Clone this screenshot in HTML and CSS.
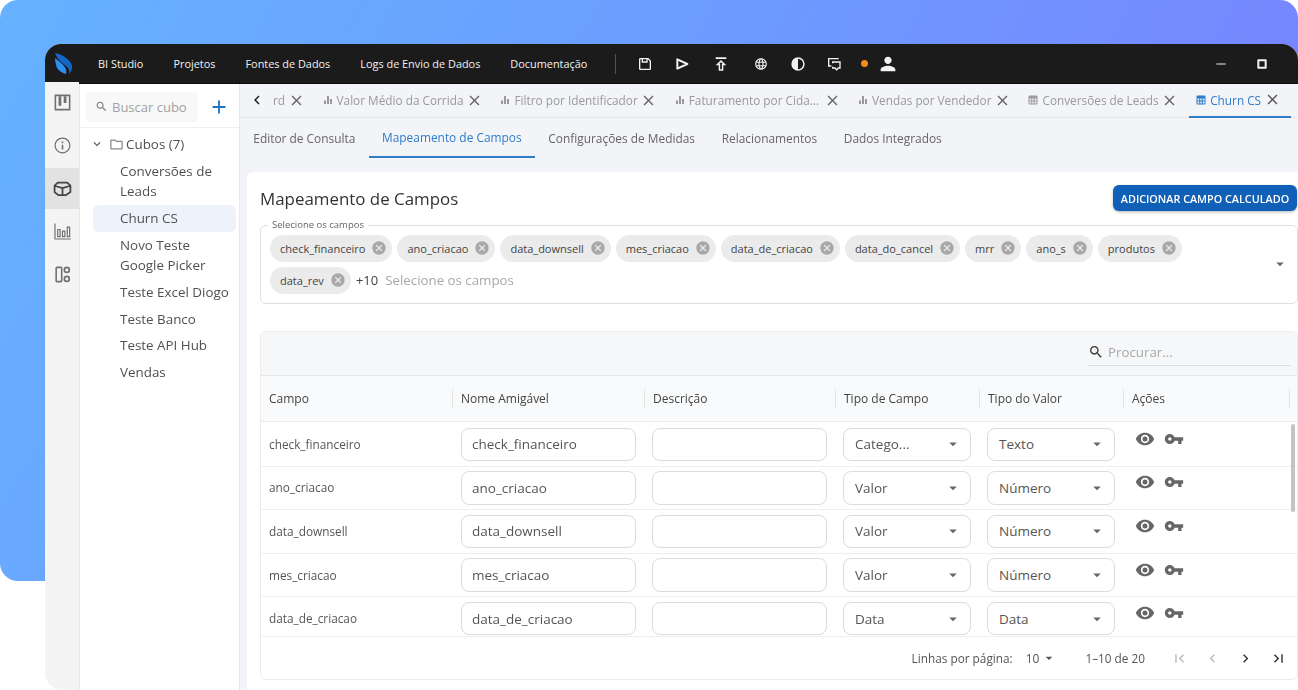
FILE: index.html
```html
<!DOCTYPE html>
<html lang="pt-BR">
<head>
<meta charset="utf-8">
<title>BI Studio</title>
<link rel="stylesheet" href="styles.css">
</head>
<body>
<svg class="defs" aria-hidden="true">
  <symbol id="i-save" viewBox="0 0 24 24"><path d="M17 3H5a2 2 0 0 0-2 2v14a2 2 0 0 0 2 2h14a2 2 0 0 0 2-2V7zm2 16H5V5h2v5h9V5h.17L19 7.83zM9 5h5v3H9z"/></symbol>
  <symbol id="i-run" viewBox="0 0 24 24"><path fill="none" stroke="currentColor" stroke-width="3" stroke-linejoin="round" d="M5 5 20 12 5 19z"/></symbol>
  <symbol id="i-pub" viewBox="0 0 24 24"><path d="M4 2h16v2.400H4zm8 4-8 8h4.500v8h7v-8H20zm1.300 6v7.800h-2.600V12H9.400L12 9.400l2.600 2.600z"/></symbol>
  <symbol id="i-globe" viewBox="0 0 24 24"><path d="M11.990 2C6.470 2 2 6.480 2 12s4.470 10 9.990 10C17.520 22 22 17.520 22 12S17.520 2 11.990 2zm6.930 6h-2.950c-.32-1.250-.78-2.450-1.380-3.560 1.840.63 3.370 1.910 4.330 3.560zM12 4.040c.83 1.200 1.480 2.530 1.910 3.960h-3.820c.43-1.430 1.080-2.760 1.910-3.960zM4.260 14C4.100 13.360 4 12.690 4 12s.1-1.360.26-2h3.380c-.08.66-.14 1.320-.14 2s.06 1.340.14 2H4.260zm.82 2h2.950c.32 1.250.78 2.450 1.380 3.560-1.840-.63-3.370-1.900-4.330-3.560zm2.950-8H5.080c.96-1.660 2.490-2.930 4.330-3.560C8.810 5.550 8.350 6.750 8.030 8zM12 19.960c-.83-1.200-1.480-2.530-1.910-3.960h3.820c-.43 1.430-1.080 2.760-1.910 3.960zM14.340 14H9.660c-.09-.66-.16-1.320-.16-2s.07-1.350.16-2h4.680c.09.650.16 1.320.16 2s-.07 1.340-.16 2zm.25 5.560c.6-1.110 1.060-2.310 1.380-3.560h2.950c-.96 1.650-2.490 2.930-4.330 3.560zM16.360 14c.08-.66.14-1.320.14-2s-.06-1.340-.14-2h3.380c.16.640.26 1.310.26 2s-.1 1.360-.26 2h-3.380z"/></symbol>
  <symbol id="i-contrast" viewBox="0 0 24 24"><path fill-rule="evenodd" d="M12 2a10 10 0 1 0 0 20 10 10 0 0 0 0-20zm0 2.200a7.800 7.800 0 0 1 0 15.600z"/></symbol>
  <symbol id="i-chat" viewBox="0 0 24 24"><path d="M3 3h16v2H5v9h3v2H3zM9 8h13v11h-3l-3 3-3-3H9v-3h2v1h3l2 2 2-2h2v-7h-9v1H9z"/></symbol>
  <symbol id="i-person" viewBox="0 0 24 24"><path d="M12 12c2.210 0 4-1.790 4-4s-1.790-4-4-4-4 1.790-4 4 1.790 4 4 4zm0 2c-2.670 0-8 1.340-8 4v2h16v-2c0-2.660-5.330-4-8-4z"/></symbol>
  <symbol id="i-search" viewBox="0 0 24 24"><path d="M15.500 14h-.79l-.28-.27C15.410 12.590 16 11.110 16 9.500 16 5.910 13.090 3 9.500 3S3 5.910 3 9.500 5.910 16 9.500 16c1.610 0 3.090-.59 4.230-1.570l.27.28v.79l5 4.990L20.490 19l-4.990-5zm-6 0C7.010 14 5 11.990 5 9.500S7.010 5 9.500 5 14 7.010 14 9.500 11.990 14 9.500 14z"/></symbol>
  <symbol id="i-close" viewBox="0 0 24 24"><path d="M19 6.410 17.590 5 12 10.590 6.410 5 5 6.410 10.590 12 5 17.590 6.410 19 12 13.410 17.590 19 19 17.590 13.410 12z"/></symbol>
  <symbol id="i-cancel" viewBox="0 0 24 24"><path d="M12 2C6.470 2 2 6.470 2 12s4.470 10 10 10 10-4.470 10-10S17.530 2 12 2zm5 13.590L15.590 17 12 13.410 8.410 17 7 15.590 10.590 12 7 8.410 8.410 7 12 10.590 15.590 7 17 8.410 13.410 12 17 15.590z"/></symbol>
  <symbol id="i-eye" viewBox="0 0 24 24"><path fill-rule="evenodd" d="M12 4.500C7 4.500 2.730 7.610 1 12c1.730 4.390 6 7.500 11 7.500s9.270-3.110 11-7.500c-1.730-4.390-6-7.500-11-7.500zM12 17c-2.760 0-5-2.240-5-5s2.240-5 5-5 5 2.240 5 5-2.240 5-5 5zm0-8a3 3 0 1 0 0 6 3 3 0 0 0 0-6z"/></symbol>
  <symbol id="i-key" viewBox="0 0 24 24"><path d="M12.650 10C11.830 7.670 9.610 6 7 6c-3.310 0-6 2.690-6 6s2.690 6 6 6c2.610 0 4.830-1.670 5.650-4H17v4h4v-4h2v-4H12.650zM7 14c-1.100 0-2-.9-2-2s.9-2 2-2 2 .9 2 2-.9 2-2 2z"/></symbol>
  <symbol id="i-bars" viewBox="0 0 24 24"><path d="M4 13h4v7H4zm6-9h4v16h-4zm6 6h4v10h-4z"/></symbol>
  <symbol id="i-table" viewBox="0 0 24 24"><path d="M5 3h14a2 2 0 0 1 2 2v14a2 2 0 0 1-2 2H5a2 2 0 0 1-2-2V5a2 2 0 0 1 2-2zm0 6v4h3.500V9zm5.500 0v4h3V9zm5 0v4H19V9zM5 15v4h3.500v-4zm5.500 0v4h3v-4zm5 0v4H19v-4z"/></symbol>
  <symbol id="i-first" viewBox="0 0 24 24"><path d="M18.410 16.590 13.820 12l4.590-4.590L17 6l-6 6 6 6zM6 6h2v12H6z"/></symbol>
  <symbol id="i-prev" viewBox="0 0 24 24"><path d="M15.410 7.410 14 6l-6 6 6 6 1.410-1.410L10.830 12z"/></symbol>
  <symbol id="i-next" viewBox="0 0 24 24"><path d="M10 6 8.590 7.410 13.170 12l-4.580 4.590L10 18l6-6z"/></symbol>
  <symbol id="i-last" viewBox="0 0 24 24"><path d="M5.590 7.410 10.180 12l-4.590 4.590L7 18l6-6-6-6zM16 6h2v12h-2z"/></symbol>
  <symbol id="i-down" viewBox="0 0 24 24"><path d="M7 10l5 5 5-5z"/></symbol>
  <symbol id="i-chev" viewBox="0 0 24 24"><path d="M16.590 8.590 12 13.170 7.410 8.590 6 10l6 6 6-6z"/></symbol>
  <symbol id="i-kanban" viewBox="0 0 24 24"><path fill-rule="evenodd" d="M2 2h20v20H2zm2 2v16h16V4z"/><path d="M7 4h3.500v12H7zm6.500 0H17v8.500h-3.500z"/></symbol>
  <symbol id="i-info" viewBox="0 0 24 24"><path d="M11 7h2v2h-2zm0 4h2v6h-2zm1-9C6.480 2 2 6.480 2 12s4.480 10 10 10 10-4.480 10-10S17.520 2 12 2zm0 18.500c-4.690 0-8.500-3.810-8.500-8.500S7.310 3.500 12 3.500s8.500 3.810 8.500 8.500-3.810 8.500-8.500 8.500z"/></symbol>
  <symbol id="i-cube" viewBox="0 0 24 24"><path fill="none" stroke="currentColor" stroke-width="2.200" stroke-linejoin="round" d="M6 4.500h12l4 4v8l-6 4H7l-5-4v-8zM2 8.500l10 3 10-3M12 11.500v9"/></symbol>
  <symbol id="i-chart" viewBox="0 0 24 24"><path fill="none" stroke="currentColor" stroke-width="1.500" stroke-linejoin="round" d="M2.500 2v19.500h20M6 18.500V9.500h3v9zM12 18.500v-7h3v7zM18 18.500V6.500h3v12z"/></symbol>
  <symbol id="i-widgets" viewBox="0 0 24 24"><path fill-rule="evenodd" d="M5 2h5a2 2 0 0 1 2 2v16a2 2 0 0 1-2 2H5a2 2 0 0 1-2-2V4a2 2 0 0 1 2-2zm0 2v16h5V4zm12.500-2a4.200 4.200 0 1 1 0 8.400 4.200 4.200 0 0 1 0-8.400zm0 2.200a2 2 0 1 0 0 4 2 2 0 0 0 0-4zm0 9.200a4.200 4.200 0 1 1 0 8.400 4.200 4.200 0 0 1 0-8.400zm0 2.200a2 2 0 1 0 0 4 2 2 0 0 0 0-4z"/></symbol>
  <symbol id="i-plus" viewBox="0 0 24 24"><path d="M19 13h-6v6h-2v-6H5v-2h6V5h2v6h6z"/></symbol>
  <symbol id="i-folder" viewBox="0 0 24 24"><path d="M9.170 6l2 2H20v10H4V6h5.170M10 4H4c-1.100 0-1.990.9-1.990 2L2 18c0 1.100.9 2 2 2h16c1.100 0 2-.9 2-2V8c0-1.100-.9-2-2-2h-8l-2-2z"/></symbol>
  <symbol id="i-min" viewBox="0 0 24 24"><path d="M5 11h14v2H5z"/></symbol>
  <symbol id="i-max" viewBox="0 0 24 24"><path fill-rule="evenodd" d="M6 5h12a1 1 0 0 1 1 1v12a1 1 0 0 1-1 1H6a1 1 0 0 1-1-1V6a1 1 0 0 1 1-1zm2 3v8h8V8z"/></symbol>
</svg>

<div class="hero"></div>

<div class="window">
  <header class="topbar">
    <svg class="logo" viewBox="0 0 18 21"><path class="logo-a" d="M0 0c6 1 13 5 16 10 2 4 1 8-2 11 1-3 0-6-3-8C7 10 2 6 0 0z"/><path class="logo-b" d="M0 5c3 3 7 5 9 8 2 2 3 5 2 8-4-1-7-3-9-6C1 12 0 8 0 5z"/></svg>
    <nav class="mainnav">
      <a>BI Studio</a><a>Projetos</a><a>Fontes de Dados</a><a>Logs de Envio de Dados</a><a>Documentação</a>
    </nav>
    <div class="topdiv"></div>
    <div class="tools">
      <svg class="ti t1"><use href="#i-save"/></svg>
      <svg class="ti t2"><use href="#i-run"/></svg>
      <svg class="ti t3"><use href="#i-pub"/></svg>
      <svg class="ti t4"><use href="#i-globe"/></svg>
      <svg class="ti t5"><use href="#i-contrast"/></svg>
      <svg class="ti t6"><use href="#i-chat"/></svg>
      <span class="dot"></span>
      <svg class="ti t7"><use href="#i-person"/></svg>
    </div>
    <div class="winctl">
      <svg class="ti wmin"><use href="#i-min"/></svg>
      <svg class="ti"><use href="#i-max"/></svg>
    </div>
  </header>

  <div class="body">
    <aside class="rail">
      <div class="rail-btn"><svg><use href="#i-kanban"/></svg></div>
      <div class="rail-btn"><svg><use href="#i-info"/></svg></div>
      <div class="rail-btn active"><svg><use href="#i-cube"/></svg></div>
      <div class="rail-btn"><svg><use href="#i-chart"/></svg></div>
      <div class="rail-btn"><svg><use href="#i-widgets"/></svg></div>
    </aside>

    <aside class="side">
      <div class="side-head">
        <div class="side-search"><svg><use href="#i-search"/></svg><span>Buscar cubo</span></div>
        <svg class="side-plus"><use href="#i-plus"/></svg>
      </div>
      <div class="tree-root">
        <svg class="tree-chev"><use href="#i-chev"/></svg>
        <svg class="tree-folder"><use href="#i-folder"/></svg>
        <span>Cubos (7)</span>
      </div>
      <ul class="tree">
        <li>Conversões de Leads</li>
        <li class="selected">Churn CS</li>
        <li>Novo Teste Google Picker</li>
        <li>Teste Excel Diogo</li>
        <li>Teste Banco</li>
        <li>Teste API Hub</li>
        <li>Vendas</li>
      </ul>
    </aside>

    <main class="main">
      <div class="doctabs">
        <svg class="doc-back"><use href="#i-prev"/></svg>
        <div class="doctab first"><span>rd</span><svg class="x"><use href="#i-close"/></svg></div>
        <div class="doctab"><svg class="ic"><use href="#i-bars"/></svg><span>Valor Médio da Corrida</span><svg class="x"><use href="#i-close"/></svg></div>
        <div class="doctab"><svg class="ic"><use href="#i-bars"/></svg><span>Filtro por Identificador</span><svg class="x"><use href="#i-close"/></svg></div>
        <div class="doctab trunc"><svg class="ic"><use href="#i-bars"/></svg><span>Faturamento por Cida...</span><svg class="x"><use href="#i-close"/></svg></div>
        <div class="doctab"><svg class="ic"><use href="#i-bars"/></svg><span>Vendas por Vendedor</span><svg class="x"><use href="#i-close"/></svg></div>
        <div class="doctab"><svg class="ic"><use href="#i-table"/></svg><span>Conversões de Leads</span><svg class="x"><use href="#i-close"/></svg></div>
        <div class="doctab current"><svg class="ic"><use href="#i-table"/></svg><span>Churn CS</span><svg class="x"><use href="#i-close"/></svg></div>
      </div>
      <div class="subtabs">
        <a>Editor de Consulta</a>
        <a class="on">Mapeamento de Campos</a>
        <a>Configurações de Medidas</a>
        <a>Relacionamentos</a>
        <a>Dados Integrados</a>
      </div>

      <section class="card">
        <div class="card-head">
          <h1>Mapeamento de Campos</h1>
          <button class="cta">ADICIONAR CAMPO CALCULADO</button>
        </div>

        <div class="picker">
          <span class="picker-label">Selecione os campos</span>
          <div class="chips">
            <span class="chip">check_financeiro<svg><use href="#i-cancel"/></svg></span>
            <span class="chip">ano_criacao<svg><use href="#i-cancel"/></svg></span>
            <span class="chip">data_downsell<svg><use href="#i-cancel"/></svg></span>
            <span class="chip">mes_criacao<svg><use href="#i-cancel"/></svg></span>
            <span class="chip">data_de_criacao<svg><use href="#i-cancel"/></svg></span>
            <span class="chip">data_do_cancel<svg><use href="#i-cancel"/></svg></span>
            <span class="chip">mrr<svg><use href="#i-cancel"/></svg></span>
            <span class="chip">ano_s<svg><use href="#i-cancel"/></svg></span>
            <span class="chip">produtos<svg><use href="#i-cancel"/></svg></span>
            <span class="chip">data_rev<svg><use href="#i-cancel"/></svg></span>
            <span class="more">+10</span>
            <span class="ph">Selecione os campos</span>
          </div>
          <svg class="picker-arrow"><use href="#i-down"/></svg>
        </div>

        <div class="grid">
          <div class="grid-tools">
            <div class="grid-search"><svg><use href="#i-search"/></svg><span>Procurar...</span></div>
          </div>
          <div class="row head">
            <div>Campo</div><div>Nome Amigável</div><div>Descrição</div><div>Tipo de Campo</div><div>Tipo do Valor</div><div>Ações</div>
          </div>
          <div class="rows">
            <div class="row">
              <div class="fname">check_financeiro</div>
              <div><span class="input">check_financeiro</span></div>
              <div><span class="input"></span></div>
              <div><span class="input select">Catego...<svg><use href="#i-down"/></svg></span></div>
              <div><span class="input select">Texto<svg><use href="#i-down"/></svg></span></div>
              <div class="acts"><svg class="eye"><use href="#i-eye"/></svg><svg class="key"><use href="#i-key"/></svg></div>
            </div>
            <div class="row">
              <div class="fname">ano_criacao</div>
              <div><span class="input">ano_criacao</span></div>
              <div><span class="input"></span></div>
              <div><span class="input select">Valor<svg><use href="#i-down"/></svg></span></div>
              <div><span class="input select">Número<svg><use href="#i-down"/></svg></span></div>
              <div class="acts"><svg class="eye"><use href="#i-eye"/></svg><svg class="key"><use href="#i-key"/></svg></div>
            </div>
            <div class="row">
              <div class="fname">data_downsell</div>
              <div><span class="input">data_downsell</span></div>
              <div><span class="input"></span></div>
              <div><span class="input select">Valor<svg><use href="#i-down"/></svg></span></div>
              <div><span class="input select">Número<svg><use href="#i-down"/></svg></span></div>
              <div class="acts"><svg class="eye"><use href="#i-eye"/></svg><svg class="key"><use href="#i-key"/></svg></div>
            </div>
            <div class="row">
              <div class="fname">mes_criacao</div>
              <div><span class="input">mes_criacao</span></div>
              <div><span class="input"></span></div>
              <div><span class="input select">Valor<svg><use href="#i-down"/></svg></span></div>
              <div><span class="input select">Número<svg><use href="#i-down"/></svg></span></div>
              <div class="acts"><svg class="eye"><use href="#i-eye"/></svg><svg class="key"><use href="#i-key"/></svg></div>
            </div>
            <div class="row">
              <div class="fname">data_de_criacao</div>
              <div><span class="input">data_de_criacao</span></div>
              <div><span class="input"></span></div>
              <div><span class="input select">Data<svg><use href="#i-down"/></svg></span></div>
              <div><span class="input select">Data<svg><use href="#i-down"/></svg></span></div>
              <div class="acts"><svg class="eye"><use href="#i-eye"/></svg><svg class="key"><use href="#i-key"/></svg></div>
            </div>
            <div class="scroll-thumb"></div>
          </div>
          <div class="pager">
            <span>Linhas por página:</span>
            <span class="pp">10<svg><use href="#i-down"/></svg></span>
            <span class="range">1–10 de 20</span>
            <svg class="pg off"><use href="#i-first"/></svg>
            <svg class="pg off"><use href="#i-prev"/></svg>
            <svg class="pg"><use href="#i-next"/></svg>
            <svg class="pg"><use href="#i-last"/></svg>
          </div>
        </div>
      </section>
    </main>
  </div>
</div>
</body>
</html>
```
FILE: styles.css
```css
* { box-sizing: border-box; }
html, body { margin: 0; padding: 0; height: 100%; }
body {
  position: relative;
  width: 1298px;
  height: 690px;
  overflow: hidden;
  background: #fff;
  font-family: "Open Sans", "Noto Sans", sans-serif;
  color: #444;
  padding: 44px 0 0 45px;
}
svg { display: block; fill: currentColor; flex: none; }
.defs { position: absolute; width: 0; height: 0; }

.hero {
  position: absolute;
  left: 0; top: 0;
  width: 1298px; height: 581px;
  border-radius: 18px;
  background: linear-gradient(118deg, #66b2ff 0%, #6c9cff 45%, #7b7dff 100%);
}

.window {
  position: relative;
  width: 1253px;
  height: 646px;
  border-radius: 16px 16px 0 18px;
  overflow: hidden;
  background: #f4f4f4;
  display: flex;
  flex-direction: column;
  filter: blur(.3px);
}

/* top bar */
.topbar {
  height: 40px;
  flex: none;
  background: #1b1b1b;
  border-bottom: 1px solid #0d0d0d;
  display: flex;
  align-items: center;
  color: #f2f2f2;
}
.logo { width: 18px; height: 21px; margin-left: 10px; }
.logo-a { fill: #1565c8; }
.logo-b { fill: #2b8ff0; }
.mainnav { display: flex; gap: 30px; margin-left: 25px; font-size: 10.900px; font-weight: 500; }
.topdiv { width: 1px; height: 20px; background: #555; margin-left: 28px; }
.tools { display: flex; align-items: center; margin-left: 21px; }
.ti { width: 16px; height: 16px; }
.t2, .t3, .t5, .t6 { margin-left: 21px; }
.t3 { margin-left: 23px; }
.t4 { margin-left: 25px; width: 14px; height: 14px; }
.t5 { margin-left: 22px; }
.t6 { margin-left: 20px; }
.dot { width: 7px; height: 7px; border-radius: 50%; background: #f28a1e; margin-left: 19px; }
.t7 { margin-left: 9px; width: 22px; height: 22px; }
.winctl { margin-left: auto; display: flex; gap: 25px; margin-right: 28px; }
.wmin { color: #aaa; }

/* body */
.body { flex: 1; min-height: 0; display: flex; }
.rail { width: 34px; flex: none; background: #f4f4f4; margin-top: -2.500px; }
.rail-btn { height: 42.800px; display: flex; align-items: center; justify-content: center; color: #707070; }
.rail-btn svg { width: 19px; height: 19px; }
.rail-btn.active { background: #e2e2e2 content-box; padding: 1.400px 0; color: #444; }

.side {
  width: 161px;
  flex: none;
  background: #fff;
  border-left: 1px solid #e8e8e8;
  border-right: 1px solid #e8e8e8;
}
.side-head {
  height: 44px;
  border-bottom: 1px solid #f0f0f0;
  display: flex;
  align-items: center;
  padding: 0 0 0 6px;
}
.side-search {
  width: 112px;
  height: 30px;
  margin-top: 2px;
  background: #f8f8f8;
  border-radius: 4px;
  display: flex;
  align-items: center;
  gap: 4px;
  padding-left: 9px;
  font-size: 13px;
  color: #a2a2a2;
}
.side-search svg { width: 13px; height: 13px; color: #777; }
.side-plus { width: 22px; height: 22px; margin-left: 10px; margin-top: 2px; color: #1a73c9; }
.tree-root {
  display: flex;
  align-items: center;
  height: 26px;
  margin-top: 3px;
  padding-left: 10px;
  font-size: 13.400px;
  color: #505050;
}
.tree-chev { width: 14px; height: 14px; }
.tree-folder { width: 15px; height: 15px; margin-left: 5px; margin-right: 2px; color: #888; }
.tree { list-style: none; margin: 1px 0 0 13px; padding: 0; width: 143px; font-size: 13.400px; line-height: 20px; color: #505050; }
.tree li { padding: 3.400px 4px 3.400px 27px; border-radius: 6px; }
.tree li.selected { background: #eef3fb; }

/* main */
.main { flex: 1; min-width: 0; background: #f3f4f7; display: flex; flex-direction: column; overflow: hidden; }
.doctabs {
  height: 34px;
  flex: none;
  display: flex;
  align-items: center;
  border-bottom: 1px solid #e6e6e8;
  font-size: 11.800px;
  color: #9a9a9a;
  position: relative;
}
.doc-back { width: 18px; height: 18px; margin-left: 8px; margin-bottom: 1px; color: #222; }
.doctab { display: flex; align-items: center; height: 33px; padding: 0 0 1px 16.500px; white-space: nowrap; }
.doctab.first { padding-left: 7px; }
.doctab.first .x { margin-left: 3px; }
.doctab .ic { width: 12px; height: 12px; margin-right: 3px; }
.doctab .x { width: 17px; height: 17px; margin-left: 2.500px; color: #666; }
.doctab.trunc .x { margin-left: 4.500px; }
.doctab.current { color: #2f7cc9; border-bottom: 2px solid #2f7cc9; height: 34px; padding: 0 10.500px 0 6.500px; margin-left: 10.500px; }
.doctab.current .x { color: #555; }

.subtabs {
  height: 40px;
  flex: none;
  display: flex;
  font-size: 11.900px;
  font-weight: 500;
  color: #666;
}
.subtabs a { padding: 0 13.350px; display: flex; align-items: center; height: 40px; }
.subtabs a.on { color: #2f7cc9; border-bottom: 2px solid #2f7cc9; }

.card {
  flex: 1;
  margin: 14px 0 0 7px;
  background: #fff;
  border-radius: 6px 0 0 0;
  padding: 0 0 0 13px;
  min-height: 0;
}
.card-head { height: 53px; display: flex; align-items: center; justify-content: space-between; }
.card-head h1 { margin: 0; font-size: 16.900px; font-weight: 500; color: #333; }
.cta {
  width: 184px;
  height: 26px;
  margin-right: 1px;
  margin-top: -1px;
  border: 0;
  border-radius: 6px;
  background: #1160b7;
  color: #fff;
  font-family: inherit;
  font-size: 10.800px;
  font-weight: 600;
  padding: 0;
  box-shadow: 0 1px 3px rgba(0,0,0,.3);
}

.picker {
  position: relative;
  height: 79px;
  border: 1px solid #dedede;
  border-radius: 6px;
  padding: 9px 0 0 9px;
}
.picker-label {
  position: absolute;
  left: 7px; top: -7px;
  background: #fff;
  padding: 0 4px;
  font-size: 9.500px;
  line-height: 12px;
  color: #666;
}
.chips { display: flex; flex-wrap: wrap; align-items: center; gap: 5px; width: 950px; }
.chip {
  height: 27px;
  display: flex;
  align-items: center;
  gap: 6px;
  background: #ebebeb;
  border-radius: 14px;
  padding: 0 5px 1px 10px;
  font-size: 11px;
  color: #444;
}
.chip svg { width: 16px; height: 16px; color: #a8a8a8; }
.more { font-size: 13px; color: #444; padding-bottom: 1px; }
.ph { font-size: 13.300px; color: #a8a8a8; margin-left: 2px; padding-bottom: 1px; }
.picker-arrow { position: absolute; right: 8px; top: 29px; width: 18px; height: 18px; color: #666; }

.grid {
  margin-top: 27px;
  height: 349px;
  border: 1px solid #ececec;
  border-radius: 6px;
  overflow: hidden;
  font-size: 11.800px;
  color: #555;
  display: flex;
  flex-direction: column;
}
.grid-tools { height: 44px; flex: none; background: #f6f7f9; border-bottom: 1px solid #e8e8e8; display: flex; justify-content: flex-end; align-items: center; padding-right: 6px; }
.grid-search { width: 203px; height: 26px; border-bottom: 1px solid #dedede; display: flex; align-items: center; gap: 4px; margin-top: -2px; font-size: 13.300px; color: #a8a8a8; }
.grid-search svg { width: 16px; height: 16px; color: #333; }
.row { display: grid; grid-template-columns: 192px 192px 191px 144px 144px 1fr; align-items: center; height: 43.600px; border-bottom: 1px solid #efefef; }
.row > div { padding-left: 8px; }
.row > .fname { padding-bottom: 1px; }
.rows .row > div:nth-child(n+3):not(.acts) { padding-left: 7px; }
.row.head { height: 46px; flex: none; background: #f9fafb; font-size: 12px; font-weight: 500; color: #444; border-bottom: 1px solid #eee; }
.row.head > div { position: relative; }
.row.head > div::after { content: ""; position: absolute; right: 0; top: -1px; height: 20px; width: 1px; background: #e4e4e4; }
.row.head > div:last-child::after { right: 7px; }
.rows { position: relative; flex: 1; min-height: 0; overflow: hidden; padding-top: 1px; }
.input {
  display: flex;
  align-items: center;
  height: 33.500px;
  width: 175px;
  border: 1px solid #dcdcdc;
  border-radius: 8px;
  padding: 0 10px;
  font-size: 13.500px;
  color: #555;
  background: #fff;
}
.select { width: 128px; justify-content: space-between; padding: 0 8px 0 11px; }
.select svg { width: 18px; height: 18px; color: #666; }
.row > .acts { display: flex; align-items: center; gap: 9px; padding: 0 0 11px 11px; color: #666; }
.eye { width: 20px; height: 20px; }
.key { width: 20px; height: 20px; }
.scroll-thumb { position: absolute; right: 2px; top: 2px; width: 4px; height: 88px; border-radius: 2px; background: #c4c4c4; }

.pager { height: 43px; flex: none; display: flex; align-items: center; justify-content: flex-end; padding-right: 10px; font-size: 11.800px; color: #555; border-top: 1px solid #efefef; }
.pp { display: flex; align-items: center; margin-left: 13px; font-size: 12px; }
.pp svg { width: 16px; height: 16px; margin-left: 2px; }
.range { margin-left: 28px; margin-right: 10px; }
.pg { width: 17px; height: 17px; margin-left: 16px; color: #333; }
.pg.off { color: #bbb; }
```
